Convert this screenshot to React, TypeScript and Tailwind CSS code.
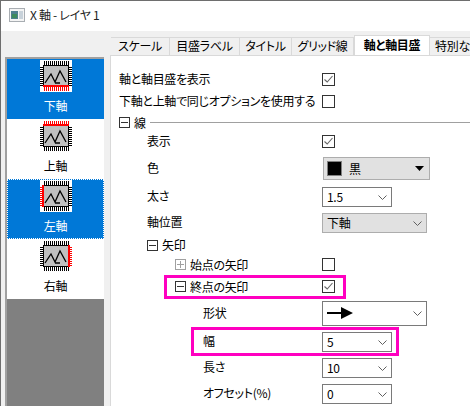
import type { ReactNode } from "react";

const FONT = "font-['Noto_Sans_CJK_JP','Liberation_Sans',sans-serif] [font-feature-settings:'palt'] text-[12px] leading-none tracking-[-0.3px]";

const TABS = [
  { label: "スケール", width: "w-[59px]" },
  { label: "目盛ラベル", width: "w-[70px]" },
  { label: "タイトル", width: "w-[52px]" },
  { label: "グリッド線", width: "w-[62px]" },
  { label: "軸と軸目盛", width: "w-[76px]", active: true },
  { label: "特別な", width: "w-[46px]" },
];

type Side = "bottom" | "top" | "left" | "right";

function ChipIcon({ side }: { side: Side }) {
  const hPins = [4, 6, 8, 10, 12, 14, 16, 18, 20, 22, 24, 26, 28];
  const vPins = [7, 9, 11, 13, 15, 17, 19, 21, 23, 25];
  const c = (s: Side) => (side === s ? "#ff0000" : "#000000");
  return (
    <svg width="32" height="32" viewBox="0 0 32 32" shapeRendering="crispEdges" className="bg-white shrink-0">
      {hPins.map((p) => (
        <g key={p}>
          <rect x={p} y="1" width="1" height="4" fill={c("top")} />
          <rect x={p} y="27" width="1" height="4" fill={c("bottom")} />
        </g>
      ))}
      {vPins.map((p) => (
        <g key={p}>
          <rect x="0" y={p} width="3" height="1" fill={c("left")} />
          <rect x="29" y={p} width="3" height="1" fill={c("right")} />
        </g>
      ))}
      <rect x="3" y="5" width="26" height="22" fill="#c0c0c0" stroke="none" />
      <rect x="3" y="5" width="26" height="1" fill="#000000" />
      <rect x="3" y="26" width="26" height="1" fill="#000000" />
      <rect x="3" y="5" width="1" height="22" fill="#000000" />
      <rect x="28" y="5" width="1" height="22" fill="#000000" />
      {side === "top" && <rect x="3" y="4" width="26" height="2" fill="#ff0000" />}
      {side === "bottom" && <rect x="3" y="25" width="26" height="2" fill="#ff0000" />}
      {side === "left" && <rect x="2" y="5" width="2" height="22" fill="#ff0000" />}
      {side === "right" && <rect x="28" y="5" width="2" height="22" fill="#ff0000" />}
      <path d="M5 23 L11 14 L15 22 L20 11 L26 22 M15 23 H20" fill="none" stroke="#000" strokeWidth="1.3" shapeRendering="auto" />
    </svg>
  );
}

function AxisItem({ side, label, active, focus }: { side: Side; label: string; active?: boolean; focus?: boolean }) {
  return (
    <div
      className={`h-[60px] shrink-0 flex flex-col items-center pt-px ${active ? "bg-[#0078d7] text-white" : "bg-white text-black"} ${
        focus ? "outline-1 outline-dotted -outline-offset-1 outline-white" : ""
      }`}
    >
      <ChipIcon side={side} />
      <span className="mt-[8px]">{label}</span>
    </div>
  );
}

function Check({ checked }: { checked?: boolean }) {
  return (
    <div className="w-[13px] h-[13px] border border-[#333333] bg-white flex items-center justify-center">
      {checked && (
        <svg width="11" height="11" viewBox="0 0 11 11">
          <path d="M1.5 5.5 L4.2 8 L9.5 2" fill="none" stroke="#666666" strokeWidth="1.1" />
        </svg>
      )}
    </div>
  );
}

function Chevron() {
  return (
    <svg width="9" height="5" viewBox="0 0 9 5" className="shrink-0">
      <path d="M0.5 0.5 L4.5 4.5 L8.5 0.5" fill="none" stroke="#606060" strokeWidth="1" />
    </svg>
  );
}

function Combo({ children, w, flat, h = "h-[20px]" }: { children: ReactNode; w: string; flat?: boolean; h?: string }) {
  return (
    <div className={`${w} ${h} border flex items-center justify-between pl-1 pr-1 ${flat ? "bg-[#e1e1e1] border-[#adadad]" : "bg-white border-[#7a7a7a]"}`}>
      <span className="-mt-px">{children}</span>
      <Chevron />
    </div>
  );
}

function Expander({ open, light }: { open?: boolean; light?: boolean }) {
  const stroke = light ? "#a0a0a0" : "#333333";
  return (
    <svg width="11" height="11" viewBox="0 0 11 11" className="shrink-0" shapeRendering="crispEdges">
      <rect x="0.5" y="0.5" width="10" height="10" fill="none" stroke={stroke} />
      <rect x="2" y="5" width="7" height="1" fill={stroke} />
      {!open && <rect x="5" y="2" width="1" height="7" fill={stroke} />}
    </svg>
  );
}

// 左: ラベル列 / 右: コントロール列
function Row({ h, indent, label, children }: { h: string; indent: string; label: ReactNode; children?: ReactNode }) {
  return (
    <div className={`${h} flex items-center`}>
      <div className={`w-[203px] shrink-0 ${indent} flex items-center gap-1`}>{label}</div>
      {children}
    </div>
  );
}

export default function App() {
  return (
    <div className={`${FONT} w-[470px] h-[406px] overflow-hidden bg-[#f0f0f0] text-black border-t border-l border-[#6e6e6e] flex flex-col`}>
      <div className="h-[30px] shrink-0 bg-white flex items-center pl-[8px] pb-[2px] gap-[5px] text-[#222222]">
        <svg width="16" height="14" viewBox="0 0 16 14" shapeRendering="crispEdges">
          <rect x="0.5" y="0.5" width="15" height="13" fill="#f4f4f4" stroke="#a8adb2" />
          <rect x="2" y="3" width="7" height="8" fill="#4d7f8f" />
          <rect x="3" y="6" width="5" height="4" fill="#3c8a5c" />
          <rect x="10" y="3" width="4" height="8" fill="#c8d2da" />
        </svg>
        <span>X 軸 - レイヤ 1</span>
      </div>

      <div className="flex-1 flex min-h-0 pt-[6px]">
        <div className="w-[109px] shrink-0 pl-[4px] pr-[6px] pt-[20px]">
          <div className="h-full overflow-hidden border-t-2 border-l-2 border-[#a0a0a0] bg-[#808080] flex flex-col">
            <AxisItem side="bottom" label="下軸" active />
            <AxisItem side="top" label="上軸" />
            <AxisItem side="left" label="左軸" active focus />
            <AxisItem side="right" label="右軸" />
          </div>
        </div>

        <div className="flex-1 min-w-0 flex flex-col">
          <div className="h-[18px] shrink-0 flex items-end pl-px">
            {TABS.map((t) => (
              <div
                key={t.label}
                className={`${t.width} shrink-0 flex items-center justify-center pb-[2px] ${
                  t.active
                    ? "h-[20px] -mt-[2px] bg-white border-x border-t border-[#d9d9d9] font-bold"
                    : "h-[18px] border-t border-r border-[#d9d9d9] bg-[#f0f0f0]"
                }`}
              >
                {t.label}
              </div>
            ))}
          </div>

          <div className="relative flex-1 bg-white border-t border-l border-[#d9d9d9] pl-[8px]">
            <div className="h-[13px]" />
            <Row h="h-[21px]" indent="" label={<span className="-mt-[2px]">軸と軸目盛を表示</span>}><Check checked /></Row>
            <Row h="h-[23px]" indent="" label={<span className="-mt-[2px]">下軸と上軸で同じオプションを使用する</span>}><Check /></Row>
            <div className="h-[19px] flex items-center">
              <Expander open />
              <span className="ml-1">線</span>
              <div className="flex-1 h-px bg-[#a0a0a0] ml-[4px]" />
            </div>
            <Row h="h-[19px]" indent="pl-[28px]" label={<span className="-mt-[2px]">表示</span>}><Check checked /></Row>
            <Row h="h-[35px]" indent="pl-[28px]" label={<span className="-mt-[2px]">色</span>}>
              <div className="w-[107px] h-[23px] ml-px bg-[#e1e1e1] border border-[#adadad] flex items-center pl-[3px] pr-[5px]">
                <div className="w-[15px] h-[15px] bg-black border border-[#808080]" />
                <span className="ml-[7px]">黒</span>
                <svg width="9" height="5" viewBox="0 0 9 5" className="ml-auto">
                  <path d="M0 0 H9 L4.5 5 Z" fill="#000000" />
                </svg>
              </div>
            </Row>
            <Row h="h-[22px]" indent="pl-[28px]" label={<span className="-mt-[2px]">太さ</span>}><Combo w="w-[70px]">1.5</Combo></Row>
            <Row h="h-[30px]" indent="pl-[28px]" label={<span className="-mt-[2px]">軸位置</span>}><Combo w="w-[105px]" flat>下軸</Combo></Row>
            <Row h="h-[14px]" indent="pl-[28px]" label={<><Expander open /><span>矢印</span></>} />
            <Row h="h-[25px]" indent="pl-[56px]" label={<><Expander light /><span>始点の矢印</span></>}><Check /></Row>
            <Row h="h-[19px]" indent="pl-[56px]" label={<><Expander open /><span>終点の矢印</span></>}><Check checked /></Row>
            <Row h="h-[35px]" indent="pl-[84px]" label={<span className="-mt-[2px]">形状</span>}>
              <Combo w="w-[105px]" h="h-[25px]">
                <svg width="26" height="12" viewBox="0 0 26 12" className="block">
                  <path d="M0 5 H14 V7 H0 Z M14 0 L26 6 L14 12 Z" fill="#000000" />
                </svg>
              </Combo>
            </Row>
            <Row h="h-[22px]" indent="pl-[84px]" label={<span className="-mt-[2px]">幅</span>}><Combo w="w-[70px]">5</Combo></Row>
            <Row h="h-[30px]" indent="pl-[84px]" label={<span className="-mt-[2px]">長さ</span>}><Combo w="w-[70px]">10</Combo></Row>
            <Row h="h-[22px]" indent="pl-[84px]" label={<span className="-mt-[2px]">オフセット(%)</span>}><Combo w="w-[70px]">0</Combo></Row>

            <div className="absolute left-[53px] top-[219px] w-[182px] h-[24px] border-[3px] border-[#ff00c0]" />
            <div className="absolute left-[80px] top-[271px] w-[208px] h-[29px] border-[3px] border-[#ff00c0]" />
          </div>
        </div>
      </div>
    </div>
  );
}
